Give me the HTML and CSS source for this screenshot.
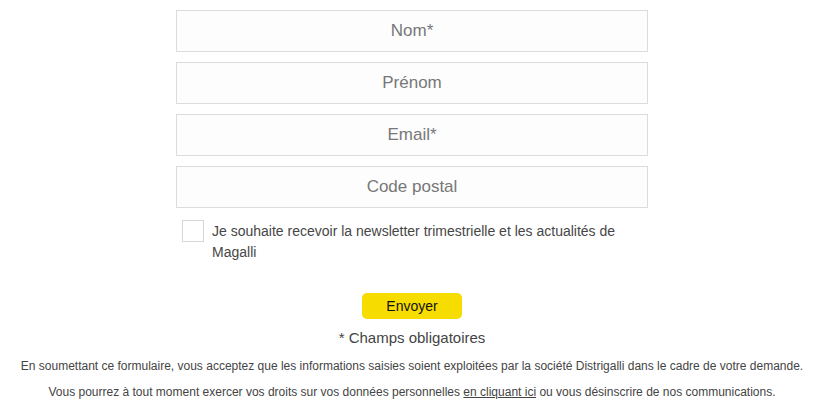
FILE: index.html
```html
<!DOCTYPE html>
<html lang="fr">
<head>
<meta charset="utf-8">
<link rel="stylesheet" href="styles.css">
</head>
<body>
<div class="page">
  <form class="form">
    <input class="field" type="text" placeholder="Nom*">
    <input class="field" type="text" placeholder="Prénom">
    <input class="field" type="email" placeholder="Email*">
    <input class="field" type="text" placeholder="Code postal">
    <label class="optin">
      <span class="box"></span>
      <span class="optin-text">Je souhaite recevoir la newsletter trimestrielle et les actualités de Magalli</span>
    </label>
  </form>
  <div class="actions">
    <button class="send" type="button">Envoyer</button>
    <p class="required">* Champs obligatoires</p>
    <p class="legal">En soumettant ce formulaire, vous acceptez que les informations saisies soient exploitées par la société Distrigalli dans le cadre de votre demande.</p>
    <p class="legal">Vous pourrez à tout moment exercer vos droits sur vos données personnelles <a href="#">en cliquant ici</a> ou vous désinscrire de nos communications.</p>
  </div>
</div>
</body>
</html>
```
FILE: styles.css
```css
* { box-sizing: border-box; }
html, body { margin: 0; padding: 0; background: #fff; }
body { font-family: "Liberation Sans", Arial, sans-serif; color: #444; }
.page { padding: 10px 0 0 11px; }
.form {
  width: 472px;
  margin: 0 auto;
  display: flex;
  flex-direction: column;
  gap: 10px;
}
.field {
  display: block;
  width: 100%;
  height: 42px;
  border: 1px solid #dcdcdc;
  background: #fdfdfd;
  font-family: "Liberation Sans", Arial, sans-serif;
  font-size: 17px;
  text-align: center;
  color: #444;
  padding: 0 10px;
  outline: none;
}
.field::placeholder { color: #777; opacity: 1; }
.optin {
  display: flex;
  align-items: flex-start;
  gap: 8px;
  padding: 2px 0 0 6px;
  font-size: 14px;
  line-height: 21px;
  color: #464646;
}
.box {
  flex: none;
  width: 22px;
  height: 22px;
  border: 1px solid #d8d8d2;
  background: #fff;
}
.optin-text { margin-top: 1px; padding-right: 20px; }
.actions {
  display: flex;
  flex-direction: column;
  align-items: center;
  padding-top: 30px;
}
.send {
  width: 100px;
  height: 26px;
  border: none;
  border-radius: 5px;
  background: #f7dc00;
  color: #111;
  font-family: "Liberation Sans", Arial, sans-serif;
  font-size: 14px;
  padding: 0;
}
.required {
  margin: 9px 0 0;
  font-size: 15px;
  line-height: 20px;
  color: #444;
}
.legal {
  margin: 9px 0 0;
  font-size: 12px;
  line-height: 18px;
  color: #444;
  text-align: center;
}
.legal + .legal { margin-top: 8px; }
.legal a { color: #444; text-decoration: underline; }
```
